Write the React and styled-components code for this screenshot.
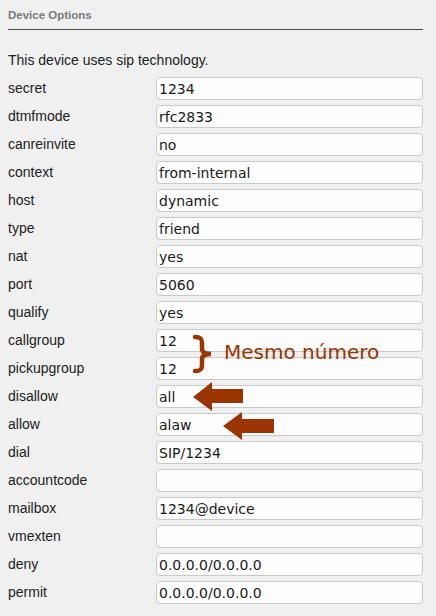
import styled, { createGlobalStyle } from 'styled-components';

const GlobalStyle = createGlobalStyle`
  html, body {
    margin: 0;
    padding: 0;
    background: #f0f0f0;
  }
  body {
    font-family: "Liberation Sans", Arial, sans-serif;
  }
`;

const Page = styled.div`
  position: relative;
  width: 436px;
  height: 616px;
  padding: 0 13px 0 8px;
  box-sizing: border-box;
  overflow: hidden;
`;

const Heading = styled.div`
  padding-top: 9px;
  height: 20px;
  font-size: 11.5px;
  font-weight: bold;
  color: #7a7a7a;
  border-bottom: 1px solid #4a4a4a;
`;

const Intro = styled.p`
  margin: 0;
  padding-top: 22px;
  height: 25px;
  font-size: 14px;
  color: #222;
`;

const Form = styled.div`
  display: flex;
  flex-direction: column;
`;

const Row = styled.div`
  display: grid;
  grid-template-columns: 148px 1fr;
  align-items: center;
  height: 28px;
  padding-bottom: 5px;
  box-sizing: border-box;
`;

const Label = styled.label`
  font-size: 14px;
  color: #222;
  margin-top: -1px;
`;

const Field = styled.input`
  height: 23px;
  box-sizing: border-box;
  border: 1px solid #c9c9c9;
  border-radius: 4px;
  background: #fdfdfd;
  padding: 0 2px;
  font-family: "DejaVu Sans", Verdana, sans-serif;
  font-size: 14px;
  color: #1a1a1a;
  outline: none;
`;

const Overlay = styled.svg`
  position: absolute;
  left: 0;
  top: 0;
  pointer-events: none;
`;

const Note = styled.span`
  position: absolute;
  left: 224px;
  top: 340px;
  font-family: "DejaVu Sans", Verdana, sans-serif;
  font-size: 20px;
  color: #9a3400;
  white-space: nowrap;
`;

const fields = [
  ['secret', '1234'],
  ['dtmfmode', 'rfc2833'],
  ['canreinvite', 'no'],
  ['context', 'from-internal'],
  ['host', 'dynamic'],
  ['type', 'friend'],
  ['nat', 'yes'],
  ['port', '5060'],
  ['qualify', 'yes'],
  ['callgroup', '12'],
  ['pickupgroup', '12'],
  ['disallow', 'all'],
  ['allow', 'alaw'],
  ['dial', 'SIP/1234'],
  ['accountcode', ''],
  ['mailbox', '1234@device'],
  ['vmexten', ''],
  ['deny', '0.0.0.0/0.0.0.0'],
  ['permit', '0.0.0.0/0.0.0.0'],
];

export default function App() {
  return (
    <>
      <GlobalStyle />
      <Page>
        <Heading>Device Options</Heading>
        <Intro>This device uses sip technology.</Intro>
        <Form>
          {fields.map(([name, value]) => (
            <Row key={name}>
              <Label htmlFor={name}>{name}</Label>
              <Field id={name} name={name} defaultValue={value} />
            </Row>
          ))}
        </Form>

        {/* annotations drawn over the form */}
        <Overlay width="436" height="616" viewBox="0 0 436 616">
          <path
            d="M195,337 C201,337 202,339 202,343 L202,349 C202,352 204,354 211,354 C204,354 202,356 202,359 L202,365 C202,369 201,371 195,371"
            fill="none"
            stroke="#9a3400"
            strokeWidth="4.5"
            strokeLinecap="round"
          />
          <polygon
            points="193,397 212,382 212,389 243,389 243,403 212,403 212,411"
            fill="#9a3400"
          />
          <polygon
            points="223,426 242,412 242,419 274,419 274,433 242,433 242,440"
            fill="#9a3400"
          />
        </Overlay>
        <Note>Mesmo número</Note>
      </Page>
    </>
  );
}
